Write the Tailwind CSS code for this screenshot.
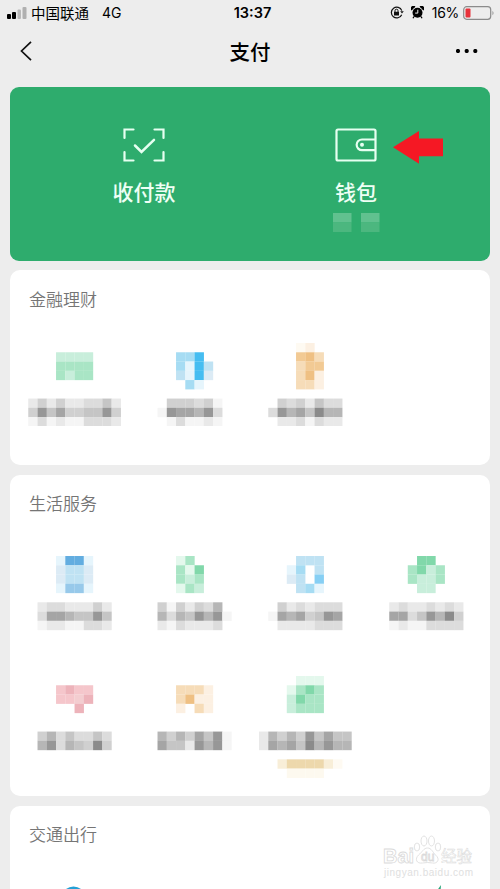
<!DOCTYPE html>
<html lang="zh-CN">
<head>
<meta charset="utf-8">
<title>支付</title>
<script src="https://cdn.jsdelivr.net/npm/@tailwindcss/browser@4"></script>
</head>
<body class="bg-[#ededed]">
<div class="relative flex h-[889px] w-[500px] flex-col overflow-hidden bg-[#ededed] font-['Noto_Sans_CJK_SC','Liberation_Sans',sans-serif] text-black">
  <header class="grid h-[26px] shrink-0 grid-cols-3 items-center pb-px pl-[7px] pr-[5px] whitespace-nowrap">
    <div class="flex items-center">
      <svg class="h-3 w-5" viewBox="0 0 20 12"><rect x="0" y="7" width="4" height="5" rx="1"/><rect x="5" y="5" width="4" height="7" rx="1"/><rect x="10.5" y="2.5" width="3.5" height="9.5" rx="1" fill="#b9b9b9"/><rect x="15.5" y="0" width="4" height="12" rx="1" fill="#b0b0b0"/></svg>
      <span class="ml-1 text-[14.5px] leading-5">中国联通</span>
      <span class="ml-[13px] font-['Inter','Liberation_Sans',sans-serif] text-[14px] leading-5">4G</span>
    </div>
    <div class="pl-[3px] text-center font-['Inter','Liberation_Sans',sans-serif] text-[14.5px] leading-5 font-semibold">13:37</div>
    <div class="flex items-center justify-end">
      <svg class="h-[13px] w-[14px]" viewBox="0 0 14 13" fill="none" stroke="#111"><path d="M11.7 8.7A5.4 5.4 0 1 1 11.8 4.6" stroke-width="1.2"/><path d="M10.2 5.2h3.6L12 7.5z" fill="#111" stroke="none"/><rect x="4" y="5.8" width="5" height="3.7" fill="#111" stroke="none"/><path d="M5 6V4.7a1.5 1.5 0 0 1 3 0V6"/></svg>
      <svg class="ml-[7px] h-[13px] w-[13px]" viewBox="0 0 13 13"><circle cx="6.5" cy="6.8" r="5"/><path d="M1 4a2 2 0 0 1 3-3M9 1a2 2 0 0 1 3 3M3 10.5l-1 1.8M10 10.5l1 1.8" stroke="#000" stroke-width="1.3"/><path d="M6.8 3.7v3.4H4.2" fill="none" stroke="#eee"/></svg>
      <span class="ml-2 font-['Inter','Liberation_Sans',sans-serif] text-[14px] leading-5 tracking-[-0.3px]">16%</span>
      <svg class="ml-1 h-[14px] w-[32px]" viewBox="0 0 32 14"><rect x=".7" y=".7" width="27" height="12.6" rx="3" fill="none" stroke="#8b8b8b" stroke-width="1.2"/><rect x="2.5" y="2.5" width="5" height="9" rx="1" fill="#e8323b"/><path d="M29.5 4.7q2 2.3 0 4.6z" fill="#8b8b8b"/></svg>
    </div>
  </header>
  <nav class="grid h-[61px] shrink-0 grid-cols-3 items-center pb-[11px] pl-5 pr-[22px]">
    <svg class="h-5 w-[12px]" viewBox="0 0 12 20" fill="none" stroke="#111" stroke-width="1.7"><path d="M11 .8 1.5 10 11 19.2"/></svg>
    <h1 class="pl-[2px] text-center text-[20.5px] leading-[30px] font-medium">支付</h1>
    <svg class="h-1 w-[22px] justify-self-end" viewBox="0 0 22 4"><circle cx="2" cy="2" r="2.1"/><circle cx="10.7" cy="2" r="2.1"/><circle cx="19.3" cy="2" r="2.1"/></svg>
  </nav>
  <main class="mx-[10px] flex flex-col gap-[10px]">
    <section class="-mb-px flex h-[174px] rounded-[9px] bg-[#2eac6d] pt-[41px] text-[21px] leading-[30px] font-medium text-[#effff5]">
      <div class="flex w-[268px] flex-col items-center gap-[14px]">
        <svg class="h-[34px] w-[42px]" viewBox="0 0 42 34" fill="none" stroke="#e6fff1" stroke-width="2.2" stroke-linecap="round"><path d="M1.5 10V1.5h9M31.5 1.5h9V10M40.5 24v8.5h-9M10.5 32.5h-9V24"/><path d="M12 17.5l6.5 6.5L31 11.8" stroke-width="2.5"/></svg>
        <span>收付款</span>
      </div>
      <div class="relative flex w-[156px] flex-col items-center gap-[14px]">
        <svg class="h-[34px] w-[42px]" viewBox="0 0 42 34" fill="none" stroke="#e6fff1" stroke-width="2.2"><rect x="1.5" y="1.5" width="39" height="31" rx="1.5"/><path d="M40 11.5H27a5.3 5.3 0 0 0 0 10.7h13"/><circle cx="27" cy="16.8" r="2" fill="#e6fff1" stroke="none"/></svg>
        <span>钱包</span>
        <svg class="-mt-[7px] h-[19px] w-[47px]" viewBox="0 0 47 19"><path fill="#61c18f" d="M0 0h18.5v9.5H0zM28 0h18.5v9.5H28z"/><path fill="#4cb77f" d="M0 9.5h18.5V19H0zM28 9.5h18.5V19H28z"/></svg>
        <svg class="absolute top-[2px] left-[115px] h-[35px] w-[51px]" viewBox="0 0 51 35"><path d="M0 17.3 26 1v7.5h24v17.7H26v7.5z" fill="#f51824"/></svg>
      </div>
    </section>
    <section class="h-[195px] rounded-[10px] bg-white pt-[16px]">
      <h2 class="pl-[19px] text-[17px] leading-[26px] text-[#757575] font-[350]">金融理财</h2>
      <div class="mt-[30.5px] flex pl-[8.5px]">
        <svg data-art="|....bbbb|....cccc|....cbcc|||.2424223352|.4857445584|.1312113332"></svg>
        <svg data-art="|....ggh.|....gehf|....feht|.....ge.||...444341|..1877683|...131121"></svg>
        <svg data-art="....xk|....mnl|....lmm|....lnk|....llk||..4342533|.38675966|..2231322"></svg>
      </div>
    </section>
    <section class="h-[321px] rounded-[10px] bg-white pt-[15px]">
      <h2 class="pl-[19px] text-[17px] leading-[26px] text-[#757575] font-[350]">生活服务</h2>
      <div class="mt-[39.6px] flex pl-[8.5px]">
        <svg data-art="....eiie|....tfft|....tfft|....ejje||..23322242|..37765585|..12211332||"></svg>
        <svg data-art="....ac.|....cad|....cbc|....acb||..4142436|..63658681|..2132223||"></svg>
        <svg data-art="....fff|...eg.f|...tf.r|....fge||..4232333|.17674587|..2222333||"></svg>
        <svg data-art="....dd.|...cdbc|...cbbc|....bb..||.23223232|.77358694|.12113333||"></svg>
      </div>
      <div class="mt-[27.7px] flex pl-[8.5px]">
        <svg data-art="|....pqpp|....ppvq|......q|||..46353353|..68365494|||"></svg>
        <svg data-art="|....lllk|....lnkk|....k.lk|||..64647581|..75528681|||"></svg>
        <svg data-art="....aaa|...acdc|...bdcc|...bccc|||2646485755|2767596866||..wsssswx|...yyyy"></svg>
      </div>
    </section>
    <section class="h-[100px] rounded-[10px] bg-white pt-[15px]">
      <h2 class="pl-[19px] text-[17px] leading-[26px] text-[#757575] font-[350]">交通出行</h2>
      <div class="mt-[38px] flex justify-between pr-[44px] pl-[52px]">
        <svg class="h-6 w-6" viewBox="0 0 24 24"><circle cx="11.5" cy="14" r="12.5" fill="#24a0d5"/></svg>
        <svg class="h-6 w-6" viewBox="0 0 24 24"><path d="M19 0 9 14h9z" fill="#2aa57a"/></svg>
      </div>
    </section>
  </main>
  <div class="absolute top-[833px] left-[382px] h-[50px] w-[94px]">
    <svg class="h-full w-full" viewBox="0 0 94 50" fill="#fff" stroke="#dadada" stroke-width=".8">
      <g><ellipse cx="35" cy="14" rx="2.7" ry="4"/><ellipse cx="42" cy="8" rx="3" ry="5"/><ellipse cx="49.5" cy="8" rx="3" ry="5"/><ellipse cx="56" cy="14" rx="2.7" ry="4"/><path d="M45.5 15c4 0 5 4 8 7 5 4 2 9-3 8q-5-1-10 0c-6 1-8-4-4-8 4-3 5-7 9-7z"/></g>
      <text x="1" y="30" font-family="Liberation Sans, sans-serif" font-size="20" font-weight="700">Bai</text>
      <text x="39" y="28" font-family="Liberation Sans, sans-serif" font-size="12">du</text>
      <text x="59" y="29" font-family="Noto Sans CJK SC, sans-serif" font-size="15.5" stroke-width=".5">经验</text>
      <text x="2" y="43" font-family="Liberation Sans, sans-serif" font-size="10" textLength="89" fill="#e0e0e0" stroke="none">jingyan.baidu.com</text>
    </svg>
  </div>
</div>
<script>
const palette = {
  1:'#f5f5f5',2:'#e9e9e9',3:'#dcdcdc',4:'#d0d0d0',5:'#c5c5c5',6:'#b6b6b6',7:'#a5a5a5',8:'#979797',9:'#8b8b8b',
  a:'#e4f8ed',b:'#c8eedb',c:'#a9e5c5',d:'#81d8aa',
  e:'#e6f5fc',t:'#dcebf5',f:'#bfe2f3',g:'#a6dcf3',r:'#86cff4',h:'#46bdf1',i:'#62ade0',j:'#97c9ea',
  k:'#fcf0e2',l:'#f6dcb8',m:'#f2ca94',n:'#efc083',
  p:'#f5c6cb',q:'#edb3ba',v:'#f3cdd0',s:'#edd8ac',w:'#f8eed8',x:'#fefaf2',y:'#fdf9ef'
};
const cell = 9.26;
document.querySelectorAll('svg[data-art]').forEach(svg => {
  const rows = svg.dataset.art.split('|');
  const width = 13 * cell, height = rows.length * cell;
  svg.setAttribute('width', width);
  svg.setAttribute('height', height);
  svg.style.flex = '0 0 ' + width + 'px';
  rows.forEach((row, y) => [...row].forEach((key, x) => {
    if (!palette[key]) return;
    const r = document.createElementNS('http://www.w3.org/2000/svg', 'rect');
    r.setAttribute('x', x * cell);
    r.setAttribute('y', y * cell);
    r.setAttribute('width', cell + 0.1);
    r.setAttribute('height', cell + 0.1);
    r.setAttribute('fill', palette[key]);
    svg.append(r);
  }));
});
</script>
</body>
</html>
